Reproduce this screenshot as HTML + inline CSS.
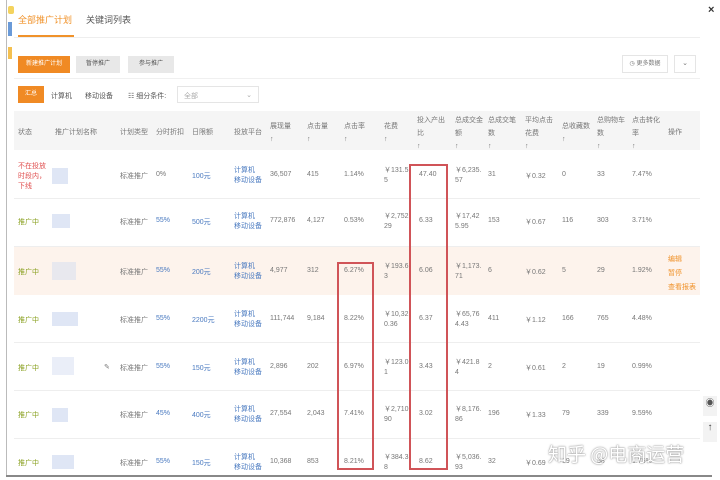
<!DOCTYPE html>
<html><head><meta charset="utf-8"><style>
*{margin:0;padding:0;box-sizing:border-box}
body{width:720px;height:480px;background:#fff;position:relative;overflow:hidden;font-family:"Liberation Sans","Noto Sans CJK SC",sans-serif;font-size:7px;color:#777}
.a{position:absolute;white-space:nowrap}
.o{color:#f0922a}.b{color:#4a7ac0}.g{color:#8aa020}.r{color:#e05050}
.row{position:absolute;left:8px;width:692px;border-bottom:1px solid #eee}
.ph{position:absolute;background:#dfe6f5;height:14px}
.box{position:absolute;border:2px solid #d05458}
</style></head><body>
<div class="a" style="left:6px;top:0;width:1px;height:476px;background:#bbb"></div>
<div class="a" style="left:6px;top:475px;width:706px;height:2px;background:#888"></div>
<div class="a" style="left:8px;top:6px;width:6px;height:8px;background:#f4d35e;border-radius:2px"></div>
<div class="a" style="left:8px;top:22px;width:4px;height:14px;background:#6a9ad8"></div>
<div class="a" style="left:8px;top:47px;width:4px;height:12px;background:#f4c050"></div>
<div class="a" style="left:708px;top:4px;font-size:11px;color:#333;font-weight:bold">×</div>
<div class="a" style="left:18px;top:13px;font-size:9px;color:#f0922a">全部推广计划</div>
<div class="a" style="left:86px;top:13px;font-size:9px;color:#555">关键词列表</div>
<div class="a" style="left:18px;top:35px;width:56px;height:2px;background:#f0922a"></div>
<div class="a" style="left:14px;top:37px;width:686px;height:1px;background:#eee"></div>
<div class="a" style="left:18px;top:56px;width:52px;height:17px;background:#f08a24;color:#fff;font-size:6px;line-height:17px;text-align:center">新建推广计划</div>
<div class="a" style="left:76px;top:56px;width:44px;height:17px;background:#e8e8e8;color:#555;font-size:6px;line-height:17px;text-align:center">暂停推广</div>
<div class="a" style="left:128px;top:56px;width:46px;height:17px;background:#e8e8e8;color:#555;font-size:6px;line-height:17px;text-align:center">参与推广</div>
<div class="a" style="left:622px;top:55px;width:46px;height:18px;border:1px solid #e5e5e5;font-size:6px;line-height:16px;text-align:center">◷ 更多数据</div>
<div class="a" style="left:674px;top:55px;width:22px;height:18px;border:1px solid #e5e5e5;font-size:7px;line-height:16px;text-align:center">⌄</div>
<div class="a" style="left:14px;top:78px;width:686px;height:1px;background:#f0f0f0"></div>
<div class="a" style="left:18px;top:86px;width:26px;height:17px;background:#f08a24;color:#fff;font-size:6px;line-height:17px;text-align:center">汇总</div>
<div class="a" style="left:51px;top:91px;color:#555">计算机</div>
<div class="a" style="left:85px;top:91px;color:#555">移动设备</div>
<div class="a" style="left:128px;top:91px;color:#555">☷ 细分条件:</div>
<div class="a" style="left:177px;top:86px;width:82px;height:17px;border:1px solid #e5e5e5;color:#aaa;padding:4px 6px">全部<span style="float:right">⌄</span></div>
<div class="a" style="left:14px;top:111px;width:686px;height:39px;background:#f5f5f5"></div>
<div class="a" style="left:18px;top:127px">状态</div>
<div class="a" style="left:55px;top:127px">推广计划名称</div>
<div class="a" style="left:120px;top:127px">计划类型</div>
<div class="a" style="left:156px;top:127px">分时折扣</div>
<div class="a" style="left:192px;top:127px">日限额</div>
<div class="a" style="left:234px;top:127px">投放平台</div>
<div class="a" style="left:270px;top:120px;line-height:13px">展现量<br>↑</div>
<div class="a" style="left:307px;top:120px;line-height:13px">点击量<br>↑</div>
<div class="a" style="left:344px;top:120px;line-height:13px">点击率<br>↑</div>
<div class="a" style="left:384px;top:120px;line-height:13px">花费<br>↑</div>
<div class="a" style="left:417px;top:114px;line-height:13px">投入产出<br>比<br>↑</div>
<div class="a" style="left:455px;top:114px;line-height:13px">总成交金<br>额<br>↑</div>
<div class="a" style="left:488px;top:114px;line-height:13px">总成交笔<br>数<br>↑</div>
<div class="a" style="left:525px;top:114px;line-height:13px">平均点击<br>花费<br>↑</div>
<div class="a" style="left:562px;top:120px;line-height:13px">总收藏数<br>↑</div>
<div class="a" style="left:597px;top:114px;line-height:13px">总购物车<br>数<br>↑</div>
<div class="a" style="left:632px;top:114px;line-height:13px">点击转化<br>率<br>↑</div>
<div class="a" style="left:668px;top:127px">操作</div>
<div class="a" style="left:14px;top:247px;width:686px;height:48px;background:#fdf3ec"></div>
<div class="row" style="top:150px;height:49px;left:14px;width:686px"></div>
<div class="row" style="top:199px;height:48px;left:14px;width:686px"></div>
<div class="row" style="top:295px;height:48px;left:14px;width:686px"></div>
<div class="row" style="top:343px;height:48px;left:14px;width:686px"></div>
<div class="row" style="top:391px;height:48px;left:14px;width:686px"></div>

<div class="a r" style="left:18px;top:162px;line-height:10px">不在投放<br>时段内，<br>下线</div>
<div class="a g" style="left:18px;top:217px">推广中</div>
<div class="a g" style="left:18px;top:267px">推广中</div>
<div class="a g" style="left:18px;top:315px">推广中</div>
<div class="a g" style="left:18px;top:363px">推广中</div>
<div class="a g" style="left:18px;top:410px">推广中</div>
<div class="a g" style="left:18px;top:458px">推广中</div>
<div class="ph" style="left:52px;top:168px;width:16px;height:16px"></div>
<div class="ph" style="left:52px;top:214px;width:18px"></div>
<div class="ph" style="left:52px;top:262px;width:24px;height:18px;background:#e8e8ee"></div>
<div class="ph" style="left:52px;top:312px;width:26px"></div>
<div class="ph" style="left:52px;top:357px;width:22px;height:18px;background:#eaeef8"></div>
<div class="ph" style="left:52px;top:408px;width:16px"></div>
<div class="ph" style="left:52px;top:455px;width:22px"></div>
<div class="a" style="left:104px;top:363px">✎</div>

<div class="a" style="left:120px;top:171px">标准推广</div><div class="a" style="left:156px;top:171px">0%</div><div class="a b" style="left:192px;top:171px">100元</div>
<div class="a" style="left:120px;top:217px">标准推广</div><div class="a b" style="left:156px;top:217px">55%</div><div class="a b" style="left:192px;top:217px">500元</div>
<div class="a" style="left:120px;top:267px">标准推广</div><div class="a b" style="left:156px;top:267px">55%</div><div class="a b" style="left:192px;top:267px">200元</div>
<div class="a" style="left:120px;top:315px">标准推广</div><div class="a b" style="left:156px;top:315px">55%</div><div class="a b" style="left:192px;top:315px">2200元</div>
<div class="a" style="left:120px;top:363px">标准推广</div><div class="a b" style="left:156px;top:363px">55%</div><div class="a b" style="left:192px;top:363px">150元</div>
<div class="a" style="left:120px;top:410px">标准推广</div><div class="a b" style="left:156px;top:410px">45%</div><div class="a b" style="left:192px;top:410px">400元</div>
<div class="a" style="left:120px;top:458px">标准推广</div><div class="a b" style="left:156px;top:458px">55%</div><div class="a b" style="left:192px;top:458px">150元</div>

<div class="a b" style="left:234px;top:166px;line-height:10px">计算机<br>移动设备</div>
<div class="a b" style="left:234px;top:212px;line-height:10px">计算机<br>移动设备</div>
<div class="a b" style="left:234px;top:262px;line-height:10px">计算机<br>移动设备</div>
<div class="a b" style="left:234px;top:310px;line-height:10px">计算机<br>移动设备</div>
<div class="a b" style="left:234px;top:358px;line-height:10px">计算机<br>移动设备</div>
<div class="a b" style="left:234px;top:405px;line-height:10px">计算机<br>移动设备</div>
<div class="a b" style="left:234px;top:453px;line-height:10px">计算机<br>移动设备</div>

<div class="a" style="left:270px;top:171px">36,507</div><div class="a" style="left:307px;top:171px">415</div><div class="a" style="left:344px;top:171px">1.14%</div><div class="a" style="left:384px;top:166px;line-height:10px">￥131.5<br>5</div><div class="a" style="left:419px;top:171px">47.40</div><div class="a" style="left:455px;top:166px;line-height:10px">￥6,235.<br>57</div><div class="a" style="left:488px;top:171px">31</div><div class="a" style="left:525px;top:171px">￥0.32</div><div class="a" style="left:562px;top:171px">0</div><div class="a" style="left:597px;top:171px">33</div><div class="a" style="left:632px;top:171px">7.47%</div>
<div class="a" style="left:270px;top:217px">772,876</div><div class="a" style="left:307px;top:217px">4,127</div><div class="a" style="left:344px;top:217px">0.53%</div><div class="a" style="left:384px;top:212px;line-height:10px">￥2,752.<br>29</div><div class="a" style="left:419px;top:217px">6.33</div><div class="a" style="left:455px;top:212px;line-height:10px">￥17,42<br>5.95</div><div class="a" style="left:488px;top:217px">153</div><div class="a" style="left:525px;top:217px">￥0.67</div><div class="a" style="left:562px;top:217px">116</div><div class="a" style="left:597px;top:217px">303</div><div class="a" style="left:632px;top:217px">3.71%</div>
<div class="a" style="left:270px;top:267px">4,977</div><div class="a" style="left:307px;top:267px">312</div><div class="a" style="left:344px;top:267px">6.27%</div><div class="a" style="left:384px;top:262px;line-height:10px">￥193.6<br>3</div><div class="a" style="left:419px;top:267px">6.06</div><div class="a" style="left:455px;top:262px;line-height:10px">￥1,173.<br>71</div><div class="a" style="left:488px;top:267px">6</div><div class="a" style="left:525px;top:267px">￥0.62</div><div class="a" style="left:562px;top:267px">5</div><div class="a" style="left:597px;top:267px">29</div><div class="a" style="left:632px;top:267px">1.92%</div>
<div class="a o" style="left:668px;top:253px;line-height:14px">编辑<br>暂停<br>查看报表</div>
<div class="a" style="left:270px;top:315px">111,744</div><div class="a" style="left:307px;top:315px">9,184</div><div class="a" style="left:344px;top:315px">8.22%</div><div class="a" style="left:384px;top:310px;line-height:10px">￥10,32<br>0.36</div><div class="a" style="left:419px;top:315px">6.37</div><div class="a" style="left:455px;top:310px;line-height:10px">￥65,76<br>4.43</div><div class="a" style="left:488px;top:315px">411</div><div class="a" style="left:525px;top:315px">￥1.12</div><div class="a" style="left:562px;top:315px">166</div><div class="a" style="left:597px;top:315px">765</div><div class="a" style="left:632px;top:315px">4.48%</div>
<div class="a" style="left:270px;top:363px">2,896</div><div class="a" style="left:307px;top:363px">202</div><div class="a" style="left:344px;top:363px">6.97%</div><div class="a" style="left:384px;top:358px;line-height:10px">￥123.0<br>1</div><div class="a" style="left:419px;top:363px">3.43</div><div class="a" style="left:455px;top:358px;line-height:10px">￥421.8<br>4</div><div class="a" style="left:488px;top:363px">2</div><div class="a" style="left:525px;top:363px">￥0.61</div><div class="a" style="left:562px;top:363px">2</div><div class="a" style="left:597px;top:363px">19</div><div class="a" style="left:632px;top:363px">0.99%</div>
<div class="a" style="left:270px;top:410px">27,554</div><div class="a" style="left:307px;top:410px">2,043</div><div class="a" style="left:344px;top:410px">7.41%</div><div class="a" style="left:384px;top:405px;line-height:10px">￥2,710.<br>90</div><div class="a" style="left:419px;top:410px">3.02</div><div class="a" style="left:455px;top:405px;line-height:10px">￥8,176.<br>86</div><div class="a" style="left:488px;top:410px">196</div><div class="a" style="left:525px;top:410px">￥1.33</div><div class="a" style="left:562px;top:410px">79</div><div class="a" style="left:597px;top:410px">339</div><div class="a" style="left:632px;top:410px">9.59%</div>
<div class="a" style="left:270px;top:458px">10,368</div><div class="a" style="left:307px;top:458px">853</div><div class="a" style="left:344px;top:458px">8.21%</div><div class="a" style="left:384px;top:453px;line-height:10px">￥384.3<br>8</div><div class="a" style="left:419px;top:458px">8.62</div><div class="a" style="left:455px;top:453px;line-height:10px">￥5,036.<br>93</div><div class="a" style="left:488px;top:458px">32</div><div class="a" style="left:525px;top:458px">￥0.69</div><div class="a" style="left:562px;top:458px">19</div><div class="a" style="left:597px;top:458px">58</div><div class="a" style="left:632px;top:458px">1.75%</div>

<div class="box" style="left:337px;top:262px;width:37px;height:208px"></div>
<div class="box" style="left:409px;top:164px;width:39px;height:306px"></div>
<div class="a" style="left:703px;top:396px;width:14px;height:20px;background:#f3f3f3;color:#555;font-size:9px;text-align:center">◉</div>
<div class="a" style="left:703px;top:422px;width:14px;height:20px;background:#f3f3f3;color:#444;font-size:10px;text-align:center;font-weight:bold">↑</div>
<div class="a" style="left:548px;top:440px;font-size:19px;color:#fff;text-shadow:0 0 2px #999,0 0 1px #888;font-family:'Noto Sans CJK SC',sans-serif">知乎 @电商运营</div>
</body></html>
